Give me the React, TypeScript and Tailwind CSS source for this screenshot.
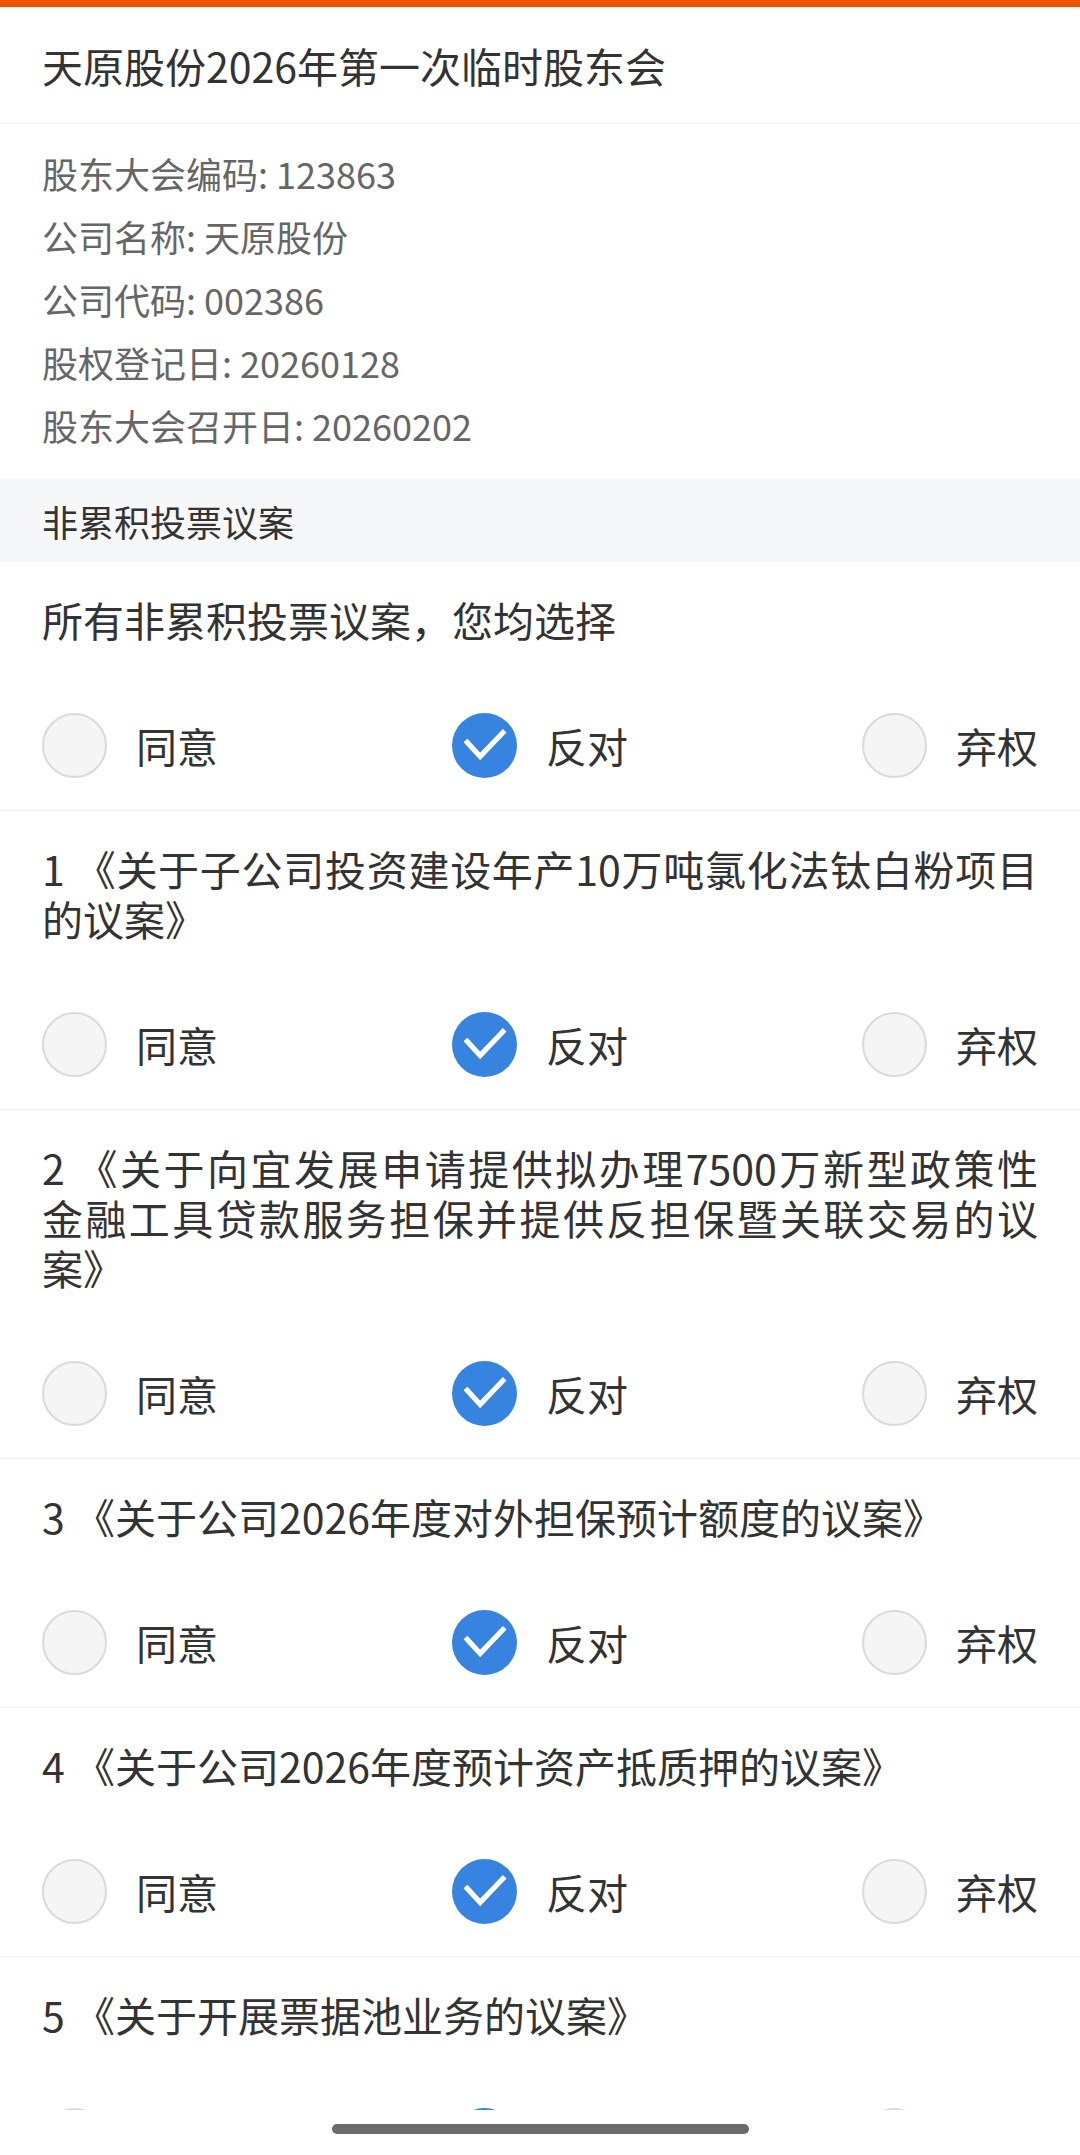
import React from 'react';

type Vote = 'agree' | 'against' | 'abstain';

const info = [
  '股东大会编码: 123863',
  '公司名称: 天原股份',
  '公司代码: 002386',
  '股权登记日: 20260128',
  '股东大会召开日: 20260202',
];

const motions: { lines: string[]; vote: Vote }[] = [
  { lines: ['所有非累积投票议案，您均选择'], vote: 'against' },
  { lines: ['1 《关于子公司投资建设年产10万吨氯化法钛白粉项目', '的议案》'], vote: 'against' },
  {
    lines: [
      '2 《关于向宜发展申请提供拟办理7500万新型政策性',
      '金融工具贷款服务担保并提供反担保暨关联交易的议',
      '案》',
    ],
    vote: 'against',
  },
  { lines: ['3 《关于公司2026年度对外担保预计额度的议案》'], vote: 'against' },
  { lines: ['4 《关于公司2026年度预计资产抵质押的议案》'], vote: 'against' },
  { lines: ['5 《关于开展票据池业务的议案》'], vote: 'against' },
];

const options: { key: Vote; label: string }[] = [
  { key: 'agree', label: '同意' },
  { key: 'against', label: '反对' },
  { key: 'abstain', label: '弃权' },
];

const Radio = ({ checked, label }: { checked: boolean; label: string }) => (
  <div className="flex items-center gap-[29px]">
    {checked ? (
      <div className="w-[65px] h-[65px] rounded-full bg-[#3683e0] flex items-center justify-center">
        <svg className="w-[66px] h-[66px]" viewBox="0 0 24 24" fill="none">
          <path
            d="M5.6 11 10.4 16.2 18.8 7.4"
            stroke="#fff"
            strokeWidth="1.9"
            strokeLinecap="square"
            strokeLinejoin="miter"
          />
        </svg>
      </div>
    ) : (
      <div className="w-[65px] h-[65px] rounded-full bg-[#f5f5f5] border-2 border-[#dadada]" />
    )}
    <span className="text-[41px] leading-[50px] text-[#333]">{label}</span>
  </div>
);

const Motion = ({ lines, vote }: { lines: string[]; vote: Vote }) => (
  <div className="px-[42px] pt-[32px] pb-[32px] border-b border-[#eeeeee]">
    <div className="text-[41px] leading-[50px] text-[#333]">
      {lines.map((line, i) => (
        <div
          key={i}
          className={i < lines.length - 1 ? 'text-justify [text-align-last:justify]' : ''}
        >
          {line}
        </div>
      ))}
    </div>
    <div className="mt-[68px] h-[66px] flex items-center justify-between">
      {options.map((o) => (
        <Radio key={o.key} checked={o.key === vote} label={o.label} />
      ))}
    </div>
  </div>
);

export default function App() {
  return (
    <div
      className="w-[1080px] h-[2155px] flex flex-col bg-white overflow-hidden"
      style={{ fontFamily: '"Noto Sans CJK SC", "Noto Sans", sans-serif' }}
    >
      <div className="flex-1 overflow-hidden">
        <div className="h-[7px] bg-[#ea5504]" />
        <div className="h-px bg-[#fbe4d6]" />
        <div className="h-[116px] px-[42px] flex items-center border-b border-[#eeeeee]">
          <h1 className="text-[41px] text-[#333]">天原股份2026年第一次临时股东会</h1>
        </div>
        <div className="px-[42px] pt-[18px] pb-[22px]">
          {info.map((t) => (
            <div key={t} className="text-[36px] leading-[63px] text-[#666]">
              {t}
            </div>
          ))}
        </div>
        <div className="h-[83px] px-[42px] flex items-center bg-[#f6f7f9] text-[36px] text-[#333]">
          非累积投票议案
        </div>
        {motions.map((m, i) => (
          <Motion key={i} lines={m.lines} vote={m.vote} />
        ))}
      </div>
      <div className="h-[45px] bg-white flex justify-center">
        <div className="mt-[14px] w-[417px] h-[10px] rounded-full bg-[#6b6b6b]" />
      </div>
    </div>
  );
}
